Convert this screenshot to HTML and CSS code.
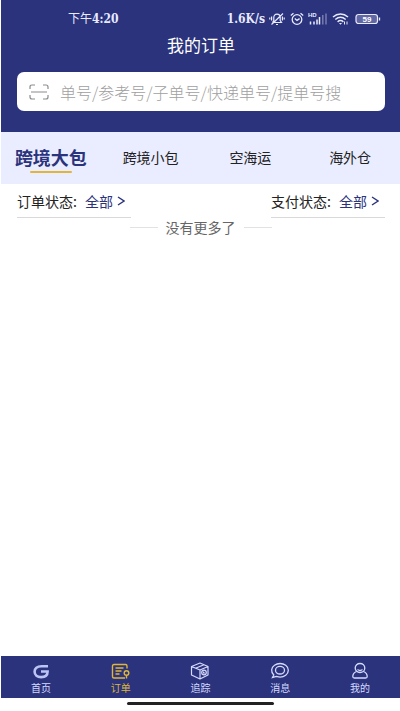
FILE: index.html
```html
<!DOCTYPE html>
<html lang="zh-CN">
<head>
<meta charset="utf-8">
<meta name="viewport" content="width=device-width, initial-scale=1">
<title>我的订单</title>
<link rel="stylesheet" href="styles.css">
</head>
<body>
<div class="app">
  <header class="header">
    <div class="status">
      <span class="time"><span class="period">下午</span>4:20</span>
      <div class="signals">
        <span>1.6K/s</span>
        <svg width="16" height="14" viewBox="0 0 16 14" fill="none" stroke="currentColor" stroke-width="1.2"><path d="M4 10.5h8.500L11.200 8.500V5.500C11.200 3.500 10 2.200 8 2.200S4.800 3.500 4.800 5.500v3L3.500 10.500M7 12.500h2M2.500 12.500l11.500-11M2.600 4.500v4M.8 5.500v2M13.400 4.500v4M15.200 5.500v2"/></svg>
        <svg class="clock" width="14" height="14" viewBox="0 0 14 14" fill="none" stroke="currentColor" stroke-width="1.300"><circle cx="7" cy="7.500" r="4.800"/><path d="M4.800 6.500L7 8.400l2.600-1.800M.8 3.500L3.500 1.200M13.200 3.500l-2.700-2.300"/></svg>
        <svg width="20" height="14" viewBox="0 0 20 14" fill="none" stroke="currentColor"><text x="0" y="5" class="hd">HD</text><path d="M2.500 9.500v3M6 9.500v3M9 7.500v5M11.500 5v7.500" stroke-width="1.500"/><path d="M14.800 3v9.500M18 1.500v11" stroke-width="1.500" opacity=".4"/></svg>
        <svg width="17" height="14" viewBox="0 0 17 14" fill="none" stroke="currentColor" stroke-width="1.500"><path d="M1 5c4.500-4 10.500-4 15 0M3.300 7.500c3.200-2.700 7.200-2.700 10.400 0M5.600 9.800c1.800-1.500 4-1.500 5.800 0"/><path d="M7 11h3l-1.500 1.800z" fill="currentColor" stroke="none"/><path d="M12.500 9.500v3M15 9.500v3" stroke-width="1"/></svg>
        <svg class="battery" width="26" height="12" viewBox="0 0 26 12"><rect x="1" y="1.500" width="21.500" height="9" rx="2.500" fill="#6166a4" stroke="currentColor" stroke-width="1.200"/><path d="M24.500 4.500v3" stroke="currentColor" stroke-width="1.300"/><text x="12" y="9" text-anchor="middle" class="charge">59</text></svg>
      </div>
    </div>
    <h1 class="title">我的订单</h1>
    <label class="search">
      <svg width="20" height="16" viewBox="0 0 20 16" fill="none" stroke="#8b8b8b" stroke-width="1.200"><path d="M1 5V3q0-2 2-2h3M14 1h3q2 0 2 2v2M19 11v2q0 2-2 2h-3M6 15H3q-2 0-2-2v-2M2 8h16"/></svg>
      <input type="text" aria-label="搜索订单" placeholder="单号/参考号/子单号/快递单号/提单号搜">
    </label>
  </header>
  <nav class="tabs">
    <button class="tab active">跨境大包</button>
    <button class="tab">跨境小包</button>
    <button class="tab">空海运</button>
    <button class="tab">海外仓</button>
  </nav>
  <main class="content">
    <div class="filters">
      <button class="filter"><span>订单状态:</span><span class="value">全部</span><svg width="8" height="10" viewBox="0 0 8 10" fill="none" stroke="#2b337c" stroke-width="1.400"><path d="M1 1l6 4-6 4"/></svg></button>
      <button class="filter"><span>支付状态:</span><span class="value">全部</span><svg width="8" height="10" viewBox="0 0 8 10" fill="none" stroke="#2b337c" stroke-width="1.400"><path d="M1 1l6 4-6 4"/></svg></button>
    </div>
    <p class="end">没有更多了</p>
  </main>
  <nav class="bottom">
    <a class="item" href="#home"><svg width="20" height="18" viewBox="0 0 20 18" fill="none" stroke="#bcc3f5" stroke-width="2.600"><path d="M17 4.300H10.500C6 4.300 3.600 6.500 3.600 9.800c0 3.200 2.700 5.300 6.500 5.300 4 0 6.500-2 6.500-5.600H10"/></svg><span>首页</span></a>
    <a class="item current" href="#orders"><svg width="20" height="18" viewBox="0 0 20 18" fill="none" stroke="currentColor" stroke-width="1.400"><path d="M16 6.500V4q0-1.500-1.500-1.500H3Q1.500 2.500 1.500 4v10.500q0 1.500 1.500 1.500h11M4.500 6h8M4.500 9h6M4.500 12h4"/><circle cx="15.500" cy="11" r="2.300"/><path d="M15.500 13.300v3.200"/></svg><span>订单</span></a>
    <a class="item" href="#track"><svg width="20" height="18" viewBox="0 0 20 18" fill="none" stroke="currentColor" stroke-width="1.200" stroke-linejoin="round"><path d="M1.500 4.500L10 1l8 3.500v8.500L10 17l-8.500-4zM1.500 4.500L10 8l8-3.500M10 8v9M5.500 6.200L14 2.800"/><circle cx="14" cy="10.500" r="2.300"/><path d="M13.500 9.500v1.500h1.500"/></svg><span>追踪</span></a>
    <a class="item" href="#messages"><svg width="20" height="18" viewBox="0 0 20 18" fill="none" stroke="currentColor" stroke-width="1.300"><path d="M2.500 15.500L3.800 13C.5 9.800 1.200 5.500 4.500 3.200c3.200-2.300 8-2.300 11.200 0 3.500 2.600 3.500 7.400 0 10-2.500 1.900-6 2.300-9.200 1.200z"/><ellipse cx="10" cy="8.200" rx="4.500" ry="3.800"/></svg><span>消息</span></a>
    <a class="item" href="#me"><svg width="20" height="18" viewBox="0 0 20 18" fill="none" stroke="currentColor" stroke-width="1.300"><ellipse cx="10" cy="6" rx="4.800" ry="4.500"/><path d="M7.500 7.500q2.500 2 5 0M6.500 9.500C4 10.500 2.800 12.500 2.800 14.500q0 1.500 1.500 1.500h11.400q1.500 0 1.500-1.500c0-2-1.200-4-3.700-5"/></svg><span>我的</span></a>
  </nav>
  <div class="gesture"></div>
</div>
</body>
</html>
```
FILE: styles.css
```css
* {
  box-sizing: border-box;
}

body {
  margin: 0;
  background: #fff;
  color: #222;
  font-family: "Noto Sans CJK SC", sans-serif;
  font-size: 14px;
}

button {
  padding: 0;
  border: 0;
  background: none;
  color: inherit;
  font: inherit;
}

svg {
  flex: none;
}

.app {
  display: flex;
  flex-direction: column;
  min-height: 100vh;
  padding-left: 1px;
}

.header {
  padding: 9px 15px 21px 16px;
  background: #2b337c;
  color: #fff;
}

.status {
  display: flex;
  align-items: center;
  justify-content: space-between;
  height: 20px;
  padding: 0 4px 0 51px;
  color: #e8eaff;
  font: bold 12px/20px "DejaVu Serif Condensed", "DejaVu Serif", "Noto Sans CJK SC", serif;
}

.time,
.signals {
  display: flex;
  align-items: center;
}

.period {
  font-weight: 400;
}

.signals {
  gap: 4px;
}

.clock {
  margin-left: 1px;
}

.battery {
  margin-left: 2px;
}

.hd {
  fill: currentColor;
  stroke: none;
  font: bold 6px "Liberation Sans", sans-serif;
}

.charge {
  fill: #fff;
  font: bold 8px "Liberation Sans", sans-serif;
}

.title {
  margin: 4px 0 15px;
  font-size: 17px;
  font-weight: 400;
  line-height: 24px;
  text-align: center;
}

.search {
  display: flex;
  align-items: center;
  gap: 11px;
  height: 39px;
  padding: 0 12px;
  border-radius: 7px;
  background: #fff;
}

.search input {
  flex: 1;
  min-width: 0;
  padding: 0;
  border: 0;
  outline: 0;
  background: none;
  color: #333;
  font: 300 16px/24px "Noto Sans CJK SC", sans-serif;
}

.search input::placeholder {
  color: #a0a0a0;
  opacity: 1;
}

.tabs {
  display: grid;
  grid-template-columns: repeat(4, 1fr);
  height: 52px;
  background: #eaedff;
}

.tab {
  position: relative;
  padding-bottom: 2px;
  line-height: 24px;
}

.active {
  color: #2b337c;
  font-size: 18px;
  font-weight: 700;
}

.active::after {
  content: "";
  position: absolute;
  bottom: 11px;
  left: 50%;
  width: 42px;
  height: 2px;
  margin-left: -21px;
  border-radius: 1px;
  background: #dfb63a;
}

.content {
  flex: 1;
}

.filters {
  display: flex;
  justify-content: space-between;
  padding: 0 15px 0 16px;
}

.filter {
  display: flex;
  align-items: center;
  width: 114px;
  height: 34px;
  border-bottom: 1px solid #d9d9d9;
  white-space: nowrap;
}

.value {
  margin: 0 4px 0 8px;
  color: #2b337c;
}

.end {
  display: flex;
  align-items: center;
  justify-content: center;
  gap: 8px;
  margin: 0;
  color: #666;
  line-height: 18px;
}

.end::before,
.end::after {
  content: "";
  width: 28px;
  height: 1px;
  background: #e2e2e2;
}

.bottom {
  display: grid;
  grid-template-columns: repeat(5, 1fr);
  height: 42px;
  background: #2b337c;
}

.item {
  display: flex;
  flex-direction: column;
  align-items: center;
  padding-top: 6px;
  color: #d5daff;
  font-size: 10px;
  line-height: 16px;
  text-decoration: none;
}

.current {
  color: #dfb63a;
}

.gesture {
  width: 37%;
  height: 3px;
  margin: 4px auto 6px;
  border-radius: 2px;
  background: #222;
}
```
